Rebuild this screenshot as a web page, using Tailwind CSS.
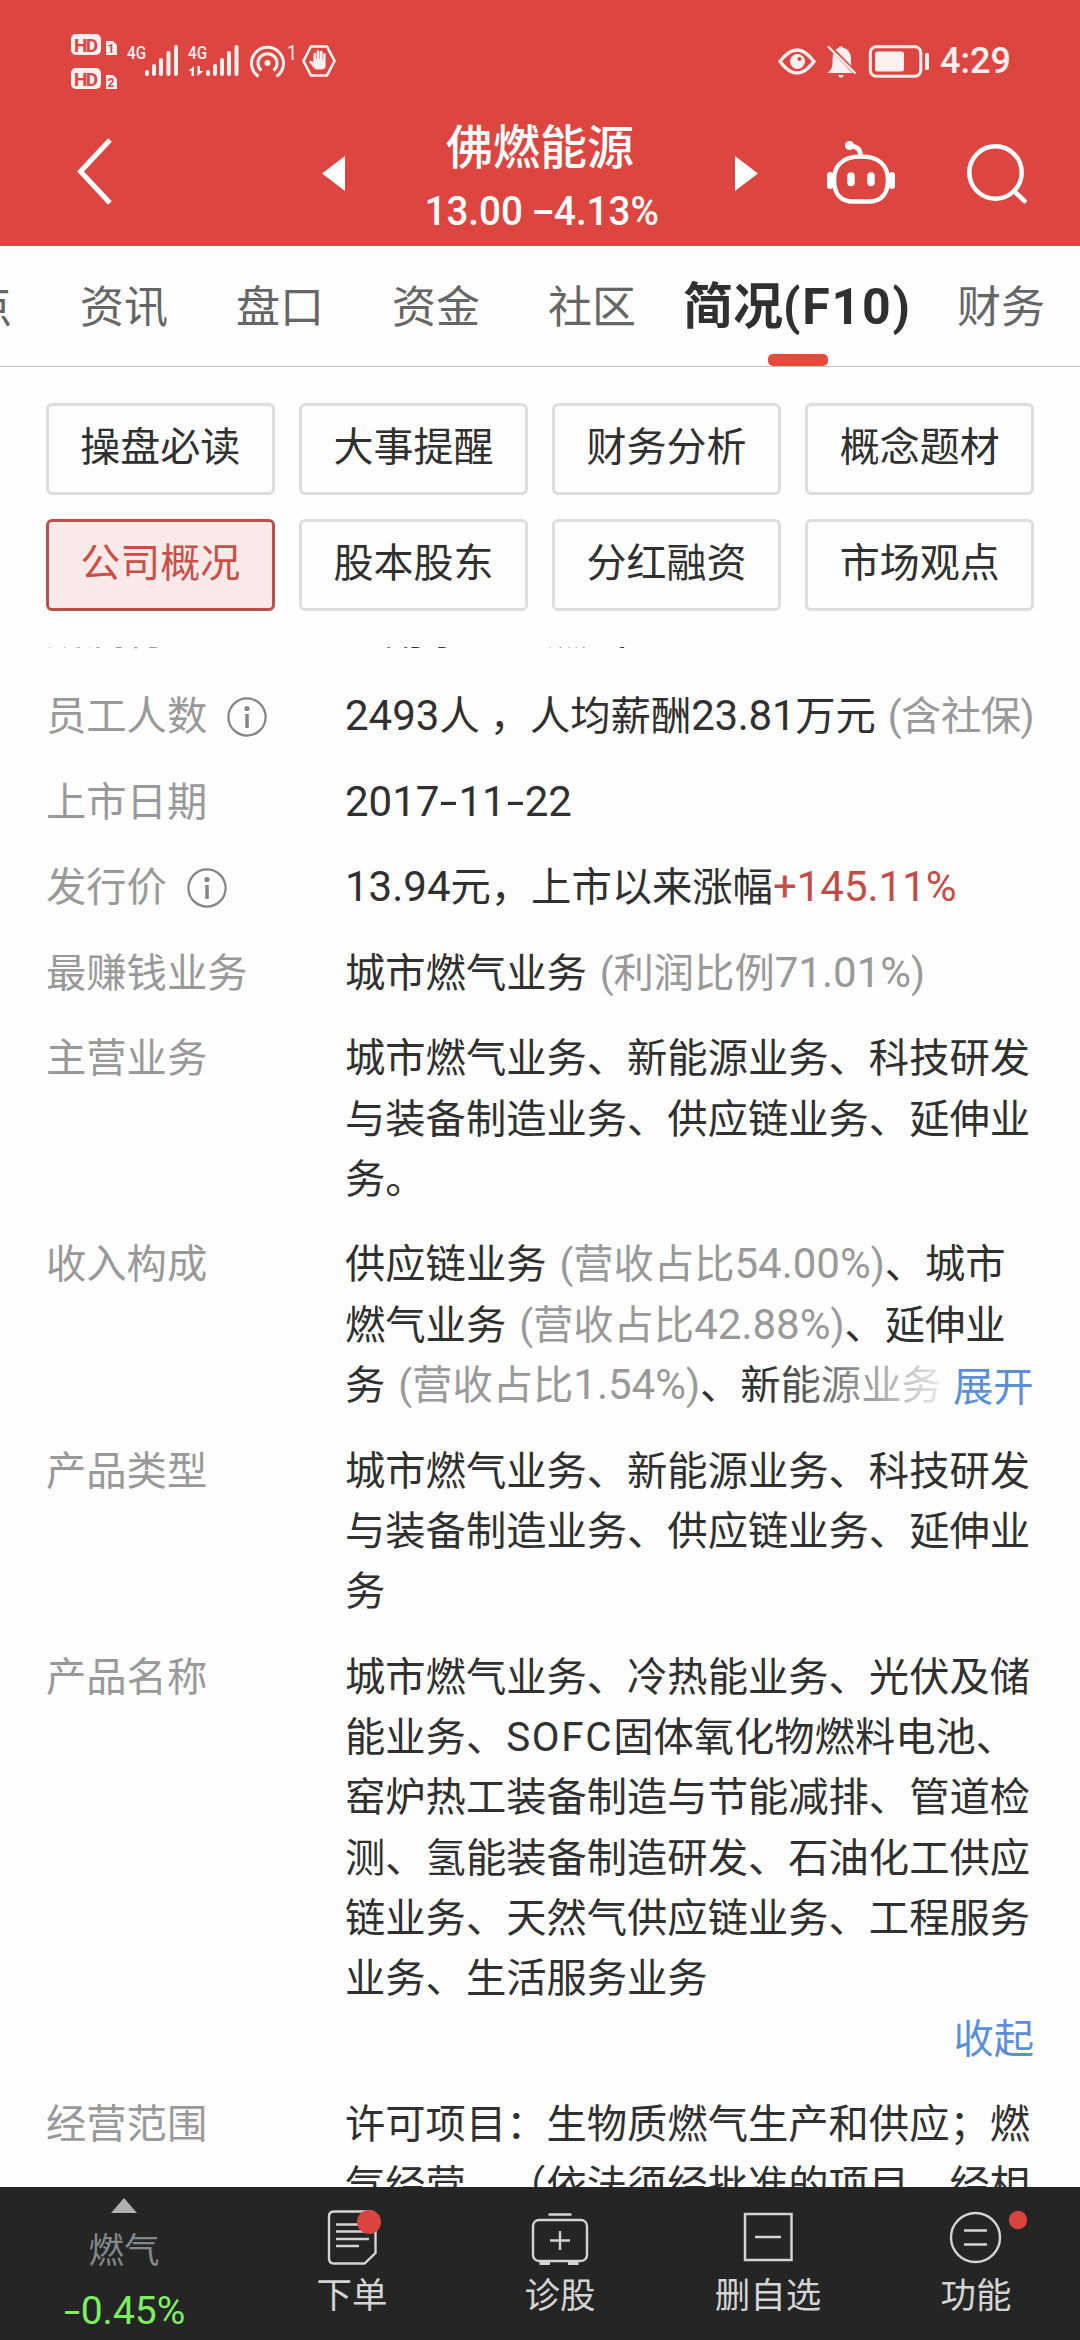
<!DOCTYPE html>
<html lang="zh-CN">
<head>
    <meta charset="UTF-8">
    <meta name="viewport" content="width=device-width, initial-scale=1.0">
    <title>佛燃能源 - 简况(F10)</title>
    <script src="https://cdn.jsdelivr.net/npm/@tailwindcss/browser@4"></script>
</head>
<body class="w-[1080px] h-[2340px] overflow-hidden flex flex-col bg-[#fefefe] text-[#303030] font-[Roboto,'Noto_Sans_CJK_SC',sans-serif] [text-spacing-trim:space-all] whitespace-nowrap">
    <!-- Header -->
    <header class="h-[246px] shrink-0 bg-[#dd4540] text-white">
        <!-- Status bar -->
        <div class="h-[100px] flex items-start justify-between pl-[70px] pr-[70px] pt-[30px]">
            <svg class="w-[270px] h-[62px]" viewBox="70 30 270 62" fill="#fff0f0">
                <rect x="71" y="34" width="30" height="21" rx="5" />
                <rect x="71" y="68" width="30" height="21" rx="5" />
                <g fill="#dd4540" font-size="19" font-weight="700" text-anchor="middle">
                    <text x="86" y="51.5" textLength="24">HD</text>
                    <text x="86" y="85.500" textLength="24">HD</text>
                </g>
                <path d="M106 41h7l4 4v10h-11zM106 75h7l4 4v10h-11z" />
                <g fill="#dd4540" font-size="12" font-weight="700" text-anchor="middle">
                    <text x="111" y="53">1</text>
                    <text x="111" y="87">2</text>
                </g>
                <g font-size="18" font-weight="500">
                    <text x="127" y="59" textLength="19" lengthAdjust="spacingAndGlyphs">4G</text>
                    <text x="188" y="59" textLength="19" lengthAdjust="spacingAndGlyphs">4G</text>
                    <text x="287" y="60" font-size="20" font-weight="400" textLength="10" lengthAdjust="spacingAndGlyphs">1</text>
                </g>
                <g stroke="#fff0f0" stroke-width="4" stroke-linecap="round">
                    <path d="M147 72v2M154 66v8M161 60v14M168.500 53v21M176 47v27" />
                    <path d="M208 72v2M215 66v8M222 60v14M229 53v21M236.500 47v27" />
                </g>
                <path d="M188.500 71l5.500-5v10h-2.500v-5zM203.500 71l-6 5v-10h2.500v5z" />
                <circle cx="267.500" cy="63" r="3" />
                <g fill="none" stroke="#fff0f0" stroke-width="3">
                    <path d="M258.500 76.500a16 16 0 1 1 18 0" />
                    <path d="M261.500 70.500a9.500 9.500 0 1 1 12 0" />
                    <path d="M311 46.500h16l7.500 14.500l-7.500 14.500h-16l-7.500-14.500z" stroke-width="2.600" />
                </g>
                <path d="M313.500 62v-8a1.300 1.300 0 0 1 2.600 0v5h.6v-7.500a1.300 1.300 0 0 1 2.700 0v7.500h.5v-7a1.300 1.300 0 0 1 2.700 0v7.500h.5v-5a1.200 1.200 0 0 1 2.500 0v10.500q0 4.500-4.500 4.500h-4q-2 0-3.500-2l-4.500-5.500q.5-1.800 2.500-1z" />
            </svg>
            <div class="flex items-center gap-[9px] h-[62px] text-[#fff0f0]">
                <svg class="w-[154px] h-[62px]" viewBox="777 30 154 62" fill="#fff0f0">
                    <path d="M780 61.500q17-23 34 0q-17 23-34 0z" fill="none" stroke="#fff0f0" stroke-width="3.400" />
                    <circle cx="797.500" cy="61.500" r="7.500" />
                    <circle cx="799.500" cy="59" r="2" fill="#dd4540" />
                    <path d="M827.500 73q5-4 5-9v-4q0-11 6-12a2.700 2.700 0 0 1 5 0q7 1 7.500 11v5q0 5 4 9zM838 75h6q-3 5.500-6 0z" />
                    <path d="M827 44l29 29.500" stroke="#dd4540" stroke-width="4" />
                    <path d="M828 46.500l27.500 27" stroke="#fff0f0" stroke-width="2.400" />
                    <rect x="870.300" y="46.800" width="50.500" height="29.500" rx="6" fill="none" stroke="#fff0f0" stroke-width="3" />
                    <rect x="875" y="51.500" width="29" height="20" rx="2.500" />
                    <rect x="925" y="53" width="4" height="17" rx="1.500" />
                </svg>
                <span class="w-[70px] text-[36px] leading-[62px] font-medium">4:29</span>
            </div>
        </div>
        <!-- Title bar -->
        <div class="h-[146px] flex items-start">
            <svg class="ml-[74px] mt-[36px] w-[42px] h-[70px]" viewBox="74 136 42 70" fill="none" stroke="#fff" stroke-width="5"><path d="M110 140l-29.500 31.500l29.500 31.500" /></svg>
            <svg class="ml-[206px] mt-[56px] w-[23px] h-[35px]" viewBox="0 0 23 35" fill="#fff"><path d="M23 0v35l-23-17.500z" /></svg>
            <div class="w-[390px] flex flex-col items-center">
                <h1 class="mt-[16px] text-[47px] leading-[64px] font-medium">佛燃能源</h1>
                <div class="mt-[5px] ml-[4px] text-[41px] leading-[52px] font-medium scale-x-[.94]">13.00 <span class="inline-block w-[23px] text-center scale-x-180">-</span>4.13%</div>
            </div>
            <svg class="mt-[56px] w-[23px] h-[35px]" viewBox="0 0 23 35" fill="#fff"><path d="M0 0v35l23-17.500z" /></svg>
            <svg class="ml-[66px] mt-[38px] w-[74px] h-[70px]" viewBox="824 138 74 70" fill="none" stroke="#fff" stroke-width="4.500">
                <path d="M861 156.500c18 0 27 9 27 23.500c0 15-8 21.500-19 21.500h-16c-11 0-19-6.500-19-21.500c0-14.500 9-23.500 27-23.500z" />
                <path d="M860.500 155c0-5-3-8.500-10-9" />
                <circle cx="849.500" cy="145.500" r="4.500" fill="#fff" stroke="none" />
                <path d="M830 175v11M892 175v11" stroke-width="6" stroke-linecap="round" />
                <path d="M851 176v6.500M871 176v6.500" stroke-width="7.500" stroke-linecap="round" />
            </svg>
            <svg class="ml-[65px] mt-[40px] w-[66px] h-[66px]" viewBox="962 140 66 66" fill="none" stroke="#fff" stroke-width="4.500">
                <circle cx="994.500" cy="172.500" r="26.200" />
                <path d="M1014 192l9.500 9" stroke-linecap="round" />
            </svg>
        </div>
    </header>

    <!-- Tabs -->
    <nav class="h-[121px] shrink-0 flex items-center overflow-hidden border-b border-[#c4c4c4] text-[44px] leading-[60px] text-[#666]">
        <span class="-ml-[32px] w-[112px] pt-[3px]">点</span>
        <span class="w-[156px] pt-[3px]">资讯</span>
        <span class="w-[156px] pt-[3px]">盘口</span>
        <span class="w-[156px] pt-[3px]">资金</span>
        <span class="w-[135px] pt-[3px]">社区</span>
        <div class="w-[274px] h-[120px] relative shrink-0">
            <span class="block text-[50px] leading-[123px] font-bold text-[#303030]">简况<span class="tracking-[1.800px]">(F10)</span></span>
            <div class="absolute left-[85px] bottom-0 w-[60px] h-[12px] rounded-[5px] bg-[#e54b3d]"></div>
        </div>
        <span class="pt-[3px]">财务</span>
    </nav>

    <!-- Section buttons -->
    <div class="mt-[36px] mx-[46px] grid grid-cols-4 gap-x-[24.500px] gap-y-[24px] text-center text-[40px] leading-[84px] shrink-0">
        <a class="h-[92px] border-3 border-[#ddd] rounded-[6px]">操盘必读</a>
        <a class="h-[92px] border-3 border-[#ddd] rounded-[6px]">大事提醒</a>
        <a class="h-[92px] border-3 border-[#ddd] rounded-[6px]">财务分析</a>
        <a class="h-[92px] border-3 border-[#ddd] rounded-[6px]">概念题材</a>
        <a class="h-[92px] border-3 border-[#bc4f49] rounded-[6px] bg-[#f9eae9] text-[#c94f47]">公司概况</a>
        <a class="h-[92px] border-3 border-[#ddd] rounded-[6px]">股本股东</a>
        <a class="h-[92px] border-3 border-[#ddd] rounded-[6px]">分红融资</a>
        <a class="h-[92px] border-3 border-[#ddd] rounded-[6px]">市场观点</a>
    </div>

    <!-- Company profile -->
    <main class="mt-[36px] flex-1 min-h-0 overflow-hidden px-[46px] text-[40.300px] leading-[60.300px]">
        <dl class="-mt-[45.700px] flex flex-col gap-[25.300px]">
            <div class="flex">
                <dt class="w-[299px] shrink-0 text-[#999]">所属行业</dt>
                <dd>公用事业、燃气</dd>
            </div>
            <div class="flex">
                <dt class="w-[299px] shrink-0 flex items-center gap-[20px] text-[#999]">员工人数
                    <svg class="w-[40px] h-[40px]" viewBox="0 0 40 40" fill="none" stroke="#858585" stroke-width="2.200"><circle cx="20" cy="20" r="18.600" /><circle cx="20" cy="11.500" r="2.600" fill="#858585" stroke="none" /><path d="M20 17v14" stroke-width="3.500" /></svg>
                </dt>
                <dd><span class="text-[42px] leading-none">2493</span>人 ，人均薪酬<span class="text-[42px] leading-none tracking-[-0.300px]">23.81</span>万元 <span class="ml-[2px] tracking-[-0.500px] text-[#999]">(含社保)</span></dd>
            </div>
            <div class="flex">
                <dt class="w-[299px] shrink-0 text-[#999]">上市日期</dt>
                <dd><span class="text-[42px] leading-none">2017<span class="inline-block w-[19px] text-center scale-x-150">-</span>11<span class="inline-block w-[19px] text-center scale-x-150">-</span>22</span></dd>
            </div>
            <div class="flex">
                <dt class="w-[299px] shrink-0 flex items-center gap-[20px] text-[#999]">发行价
                    <svg class="w-[40px] h-[40px]" viewBox="0 0 40 40" fill="none" stroke="#858585" stroke-width="2.200"><circle cx="20" cy="20" r="18.600" /><circle cx="20" cy="11.500" r="2.600" fill="#858585" stroke="none" /><path d="M20 17v14" stroke-width="3.500" /></svg>
                </dt>
                <dd><span class="text-[42px] leading-none">13.94</span>元，上市以来涨幅<span class="text-[42px] leading-none text-[#c24c46]">+145.11%</span></dd>
            </div>
            <div class="flex">
                <dt class="w-[299px] shrink-0 text-[#999]">最赚钱业务</dt>
                <dd>城市燃气业务 <span class="ml-[3px] text-[#999]">(利润比例<span class="text-[42px] leading-none">71.01%</span>)</span></dd>
            </div>
            <div class="flex">
                <dt class="w-[299px] shrink-0 text-[#999]">主营业务</dt>
                <dd>城市燃气业务、新能源业务、科技研发<br>与装备制造业务、供应链业务、延伸业<br>务。</dd>
            </div>
            <div class="flex">
                <dt class="w-[299px] shrink-0 text-[#999]">收入构成</dt>
                <dd class="relative w-[689px]">
                    供应链业务 <span class="ml-[3px] text-[#999]">(营收占比<span class="text-[42px] leading-none">54.00%</span>)</span>、城市<br>燃气业务 <span class="ml-[3px] text-[#999]">(营收占比<span class="text-[42px] leading-none">42.88%</span>)</span>、延伸业<br>务 <span class="ml-[3px] text-[#999]">(营收占比<span class="text-[42px] leading-none">1.54%</span>)</span>、新能源业务
                    <div class="absolute right-0 bottom-0 flex">
                        <div class="w-[180px] h-[60px] bg-linear-to-r from-[#fefefe]/0 to-[#fefefe]/90"></div>
                        <a class="w-[92px] pl-[11px] pt-[2px] h-[60px] bg-[#fefefe] text-[#5b8fd8]">展开</a>
                    </div>
                </dd>
            </div>
            <div class="flex">
                <dt class="w-[299px] shrink-0 text-[#999]">产品类型</dt>
                <dd>城市燃气业务、新能源业务、科技研发<br>与装备制造业务、供应链业务、延伸业<br>务</dd>
            </div>
            <div class="flex">
                <dt class="w-[299px] shrink-0 text-[#999]">产品名称</dt>
                <dd class="w-[689px]">
                    城市燃气业务、冷热能业务、光伏及储<br>能业务、<span class="tracking-[1.700px]">SOFC</span>固体氧化物燃料电池、<br>窑炉热工装备制造与节能减排、管道检<br>测、氢能装备制造研发、石油化工供应<br>链业务、天然气供应链业务、工程服务<br>业务、生活服务业务
                    <a class="block text-right text-[#5b8fd8]">收起</a>
                </dd>
            </div>
            <div class="flex">
                <dt class="w-[299px] shrink-0 text-[#999]">经营范围</dt>
                <dd>许可项目：生物质燃气生产和供应；燃<br>气经营。（依法须经批准的项目，经相</dd>
            </div>
        </dl>
    </main>

    <!-- Bottom toolbar -->
    <footer class="h-[153px] shrink-0 grid grid-cols-[248px_repeat(4,208px)] bg-[#252525] text-[#d4d4d4] text-[35.500px] leading-[44px] text-center">
        <div class="flex flex-col items-center">
            <svg class="mt-[11px] w-[26px] h-[15px]" viewBox="0 0 26 15" fill="#b0b0b0"><path d="M13 0l13 15h-26z" /></svg>
            <span class="mt-[16px] text-[#80898e]">燃气</span>
            <span class="mt-[16px] text-[39px] text-[#7df060]"><span class="inline-block w-[18px] text-center scale-x-150">-</span>0.45%</span>
        </div>
        <a class="flex flex-col items-center">
            <svg class="mt-[20px] w-[60px] h-[62px]" viewBox="322 2207 60 62" fill="none" stroke="#d4d4d4" stroke-width="2.400">
                <path d="M334 2211.500h36q5.500 0 5.500 5.500v36l-11 10.500h-30.500q-5 0-5-5v-42q0-5 5-5z" />
                <path d="M336 2224.500h30M336 2231.500h30M336 2239h33M336 2246h23" />
                <circle cx="369" cy="2222" r="12" fill="#d9453e" stroke="none" />
            </svg>
            <span class="mt-[5px]">下单</span>
        </a>
        <a class="flex flex-col items-center">
            <svg class="mt-[20px] w-[60px] h-[62px]" viewBox="529.500 2207 60 62" fill="none" stroke="#d4d4d4" stroke-width="2.400">
                <rect x="532.500" y="2220" width="54" height="41" rx="6" />
                <path d="M548 2214.500h23M559.500 2231v19M549.500 2240.500h20" />
                <path d="M539 2263h10.500M567.500 2263h10.500" stroke-width="4" />
            </svg>
            <span class="mt-[5px]">诊股</span>
        </a>
        <a class="flex flex-col items-center">
            <svg class="mt-[20px] w-[60px] h-[62px]" viewBox="737 2207 60 62" fill="none" stroke="#d4d4d4" stroke-width="2.500">
                <path d="M744 2214h46.500v46h-46.500zM754 2237h26" />
            </svg>
            <span class="mt-[5px]">删自选</span>
        </a>
        <a class="flex flex-col items-center">
            <svg class="mt-[20px] w-[60px] h-[62px] overflow-visible" viewBox="946 2207 60 62" fill="none" stroke="#d4d4d4" stroke-width="2.400">
                <circle cx="975.500" cy="2237.500" r="24.500" />
                <path d="M964 2230.500h23M964 2244.500h23" />
                <circle cx="1018" cy="2220" r="9.200" fill="#d9453e" stroke="none" />
            </svg>
            <span class="mt-[5px]">功能</span>
        </a>
    </footer>
</body>
</html>
